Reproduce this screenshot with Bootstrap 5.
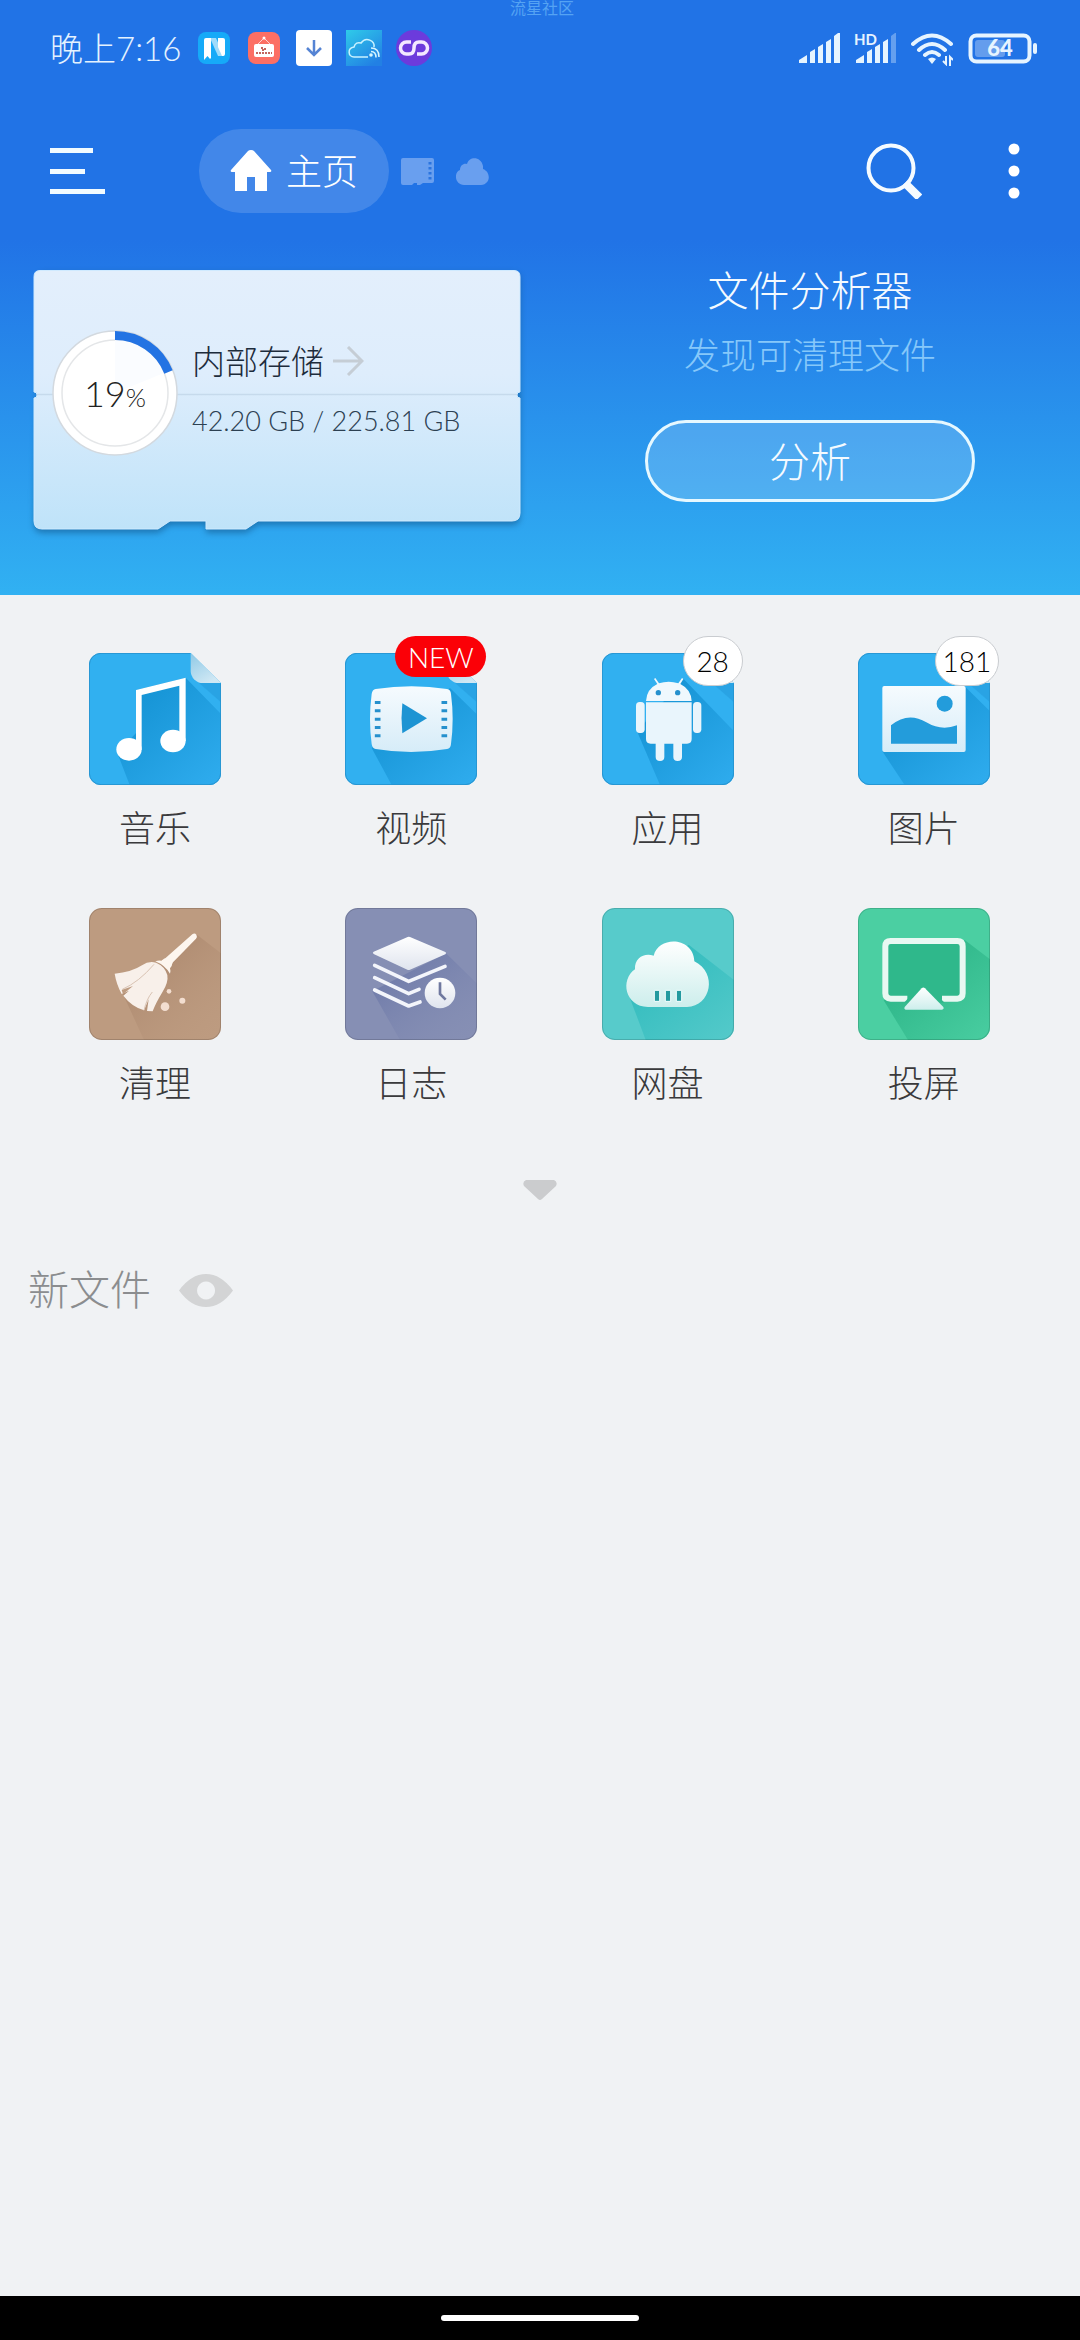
<!DOCTYPE html>
<html lang="zh-CN">
<head>
<meta charset="utf-8">
<meta name="viewport" content="width=device-width, initial-scale=1">
<title>主页</title>
<link href="https://cdn.jsdelivr.net/npm/bootstrap@5.3.0/dist/css/bootstrap.min.css" rel="stylesheet">
<style>
body{background:#f0f2f4;color:#222;font-family:Lato,"Noto Sans CJK SC",sans-serif;font-weight:300;font-size:36px;line-height:1}
a{color:inherit;text-decoration:none}
svg{display:block;flex:none}
.btn{--bs-btn-font-weight:300;--bs-btn-line-height:1;--bs-btn-padding-x:0;--bs-btn-padding-y:0;--bs-btn-font-size:36px}
.top-area{background:linear-gradient(#2173e6 0,#2173e6 240px,#31b1f2 100%);color:#f4faff;padding-bottom:65px}
.stamp{top:0;left:4px;right:0;font-size:16px;color:#55a3f3;font-weight:400;line-height:16px}
.status{height:96px;padding-left:50px;padding-right:43px}
.clock{font-size:33px;line-height:48px;width:146px;color:#e4f2ff;white-space:nowrap}
.apps{gap:14px}
.signals{gap:14px}
.toolbar{height:150px;padding-left:50px;padding-right:60px}
.home-tab{height:84px;padding:0 31px;background:rgba(255,255,255,.15);gap:14px;margin-left:94px;margin-right:12px;color:#fff}
.tabs-more{gap:22px}
.actions{gap:86px}
.dash{padding-top:24px}
.storage{margin:0 19px 0 33px;height:260px;color:#16304a}
.storage-bg{inset:0;width:100%;height:270px;overflow:visible}
.storage-row{padding-left:19px;gap:14px;height:246px}
.ring{width:126px;height:126px}
.pct{inset:0;color:#222;font-size:36px}
.pct span{font-size:26px;padding-top:8px}
.s-name{font-size:33px;gap:8px;color:#1d2c3c;line-height:60px}
.s-size{font-size:27px;color:#2c4052;line-height:60px;margin-bottom:4px}
.a-title{font-size:41px;line-height:41px}
.a-sub{font-size:36px;line-height:36px;color:#86c8fa;margin-top:26px}
.a-btn{width:330px;height:82px;margin-top:47px;border:3px solid #e6f8ff;background:rgba(255,255,255,.17);color:#f4faff;--bs-btn-font-size:41px}
.tiles{padding:58px 28px 0 27px}
.tile{height:255px;gap:24px}
.tile-label{line-height:38px;color:#3a3a3c}
.pill{top:-17px;font-size:28px;line-height:1}
.pill-new{right:-9px;width:91px;height:41px;background:#fb0007;color:#fff}
.pill-num{width:60px;height:50px;background:#fff;border:1px solid #c9ccd0;color:#000;right:-9px}
.pill-wide{width:64px}
.more{margin-top:17px;margin-left:-1px}
.recent{padding:66px 28px 0;gap:28px;font-size:41px;line-height:48px;color:#8b8d8f}
.sysnav{height:44px}
.sysnav span{width:198px;height:6px;background:#fff;border-radius:3px}
</style>
<script src="https://cdn.jsdelivr.net/npm/bootstrap@5.3.0/dist/js/bootstrap.bundle.min.js"></script>
</head>
<body class="d-flex flex-column min-vh-100">

<svg width="0" height="0" class="position-absolute" aria-hidden="true">
  <defs>
    <linearGradient id="shade" x1="0" y1="0" x2="1" y2="1"><stop offset=".2" stop-color="#1795d6"/><stop offset="1" stop-color="#31aef0"/></linearGradient>
    <linearGradient id="shadeBrown" x1="0" y1="0" x2="1" y2="1"><stop offset=".2" stop-color="#a9856b" stop-opacity=".8"/><stop offset=".9" stop-color="#bd9b80" stop-opacity=".2"/></linearGradient>
    <linearGradient id="shadeIndigo" x1="0" y1="0" x2="1" y2="1"><stop offset=".2" stop-color="#6c78a8" stop-opacity=".8"/><stop offset=".9" stop-color="#868fb4" stop-opacity=".2"/></linearGradient>
    <linearGradient id="shadeTeal" x1="0" y1="0" x2="1" y2="1"><stop offset=".2" stop-color="#33bcbe"/><stop offset="1" stop-color="#57cbcb"/></linearGradient>
    <linearGradient id="shadeGreen" x1="0" y1="0" x2="1" y2="1"><stop offset=".2" stop-color="#2db588"/><stop offset="1" stop-color="#4bcfa2"/></linearGradient>
    <linearGradient id="pale" x1="0" y1="0" x2="0" y2="1"><stop offset="0" stop-color="#f6fbfe"/><stop offset="1" stop-color="#d6ecf8"/></linearGradient>
    <linearGradient id="foldg" x1="0" y1="0" x2=".6" y2="1"><stop offset="0" stop-color="#8fc9e6"/><stop offset="1" stop-color="#d0e8f4"/></linearGradient>
    <linearGradient id="snow" x1="0" y1="0" x2="0" y2="1"><stop offset="0" stop-color="#fff"/><stop offset="1" stop-color="#dfe4ee"/></linearGradient>
    <linearGradient id="mint" x1="0" y1="0" x2="0" y2="1"><stop offset="0" stop-color="#fff"/><stop offset="1" stop-color="#cdeeec"/></linearGradient>
    <linearGradient id="cardg" x1="0" y1="0" x2="0" y2="1"><stop offset="0" stop-color="#e3effc"/><stop offset=".4" stop-color="#deedfc"/><stop offset="1" stop-color="#bfe3f9"/></linearGradient>
    <clipPath id="sheet"><path d="M36 0H305L396 90V360a36 36 0 0 1-36 36H36a36 36 0 0 1-36-36V36A36 36 0 0 1 36 0z"/></clipPath>
    <clipPath id="tilec"><rect width="396" height="396" rx="38"/></clipPath>
    <g id="paper"><path d="M36 0H305L396 90V360a36 36 0 0 1-36 36H36a36 36 0 0 1-36-36V36A36 36 0 0 1 36 0z" fill="#31b0f0"/><path d="M330 90H396V148z" fill="#2399da" opacity=".55"/></g>
    <g id="edge"><path d="M305 0L396 90H342a37 37 0 0 1-37-37z" fill="url(#foldg)"/><path d="M395 92V360a35 35 0 0 1-35 35H36a35 35 0 0 1-35-35V36A35 35 0 0 1 36 1H304" fill="none" stroke="#2793cf" stroke-width="3"/></g>
    <g id="frame"><rect x="1.500" y="1.500" width="393" height="393" rx="37" fill="none" stroke="#000" stroke-opacity=".15" stroke-width="3"/></g>
  </defs>
</svg>

<header class="top-area position-relative">
  <div class="stamp position-absolute text-center">流星社区</div>

  <div class="status d-flex align-items-center justify-content-between">
    <div class="d-flex align-items-center">
      <div class="clock">晚上7:16</div>
      <div class="apps d-flex align-items-center">
        <svg width="36" height="32" viewBox="-2 0 36 32"><rect width="32" height="32" rx="8" fill="#16aaf8"/><path d="M12 6h6l8 18h-6z" fill="#9fdbfb"/><path d="M6 8q0-2 2-2h5v20l-1 1-2.500-3L6 28z" fill="#fff"/><path d="M20 6h5q2 0 2 2v14q0 2-2 2h-1l-4-9z" fill="#fff"/></svg>
        <svg width="36" height="32" viewBox="-2 0 36 32"><rect width="32" height="32" rx="8" fill="#fc6f64"/><path d="M10 12l6-6 6 6" fill="none" stroke="#fff" stroke-opacity=".7"/><circle cx="16" cy="6" r="1.500" fill="#fff"/><rect x="6" y="12" width="20" height="13" rx="2" fill="#fff"/><path d="M14 15v3h3v-3M8 21h16" fill="none" stroke="#c4655e" stroke-width="2" stroke-dasharray="2 1"/></svg>
        <svg width="36" height="36" viewBox="0 0 36 36"><rect width="36" height="36" rx="4" fill="#fff"/><path d="M18 10v15M11 18l7 7 7-7" fill="none" stroke="#5584d4" stroke-width="2.500"/></svg>
        <svg width="36" height="36" viewBox="0 0 36 36"><defs><linearGradient id="cg" x1="0" y1="0" x2=".7" y2="1"><stop offset="0" stop-color="#2fcbe9"/><stop offset="1" stop-color="#2280e4"/></linearGradient></defs><rect width="36" height="36" fill="url(#cg)"/><path d="M22 27H8c-6 0-7-9 0-10 1-4 4-5 7-4 5-7 14-2 13 4" fill="none" stroke="#c9f2ff" stroke-width="1.500"/><circle cx="25" cy="25" r="1.800" fill="#d7f5ff"/><path d="M25 21.500q5 0 5 6M25 18q8 0 8 9" fill="none" stroke="#d7f5ff" stroke-width="1.500"/></svg>
        <svg width="36" height="36" viewBox="0 0 36 36"><circle cx="18" cy="18" r="18" fill="#6c3bdc"/><path d="M15 12h-4.500a6 6 0 0 0 0 12H13q5 0 5-6t5-6h2.500a6 6 0 0 1 0 12H21" fill="none" stroke="#f3e9ff" stroke-width="3.500"/></svg>
      </div>
    </div>
    <div class="signals d-flex align-items-center">
      <svg width="41" height="30" viewBox="0 0 41 30" fill="#e6f4ff"><path d="M0 30v-3l8-5v8zM11 30V19l5-3v14zM19 30V14l5-3v19zM27 30V9l5-3v24zM35 30V3l4-3h2v30z"/></svg>
      <svg width="43" height="36" viewBox="0 -3 43 36" fill="#e6f4ff"><text x="0" y="12" font-family="Lato" font-size="15" font-weight="700">HD</text><path d="M2 30v-3l8-5v8zM13 30V19l5-3v14zM21 30V14l5-3v19zM29 30V9l5-3v24z"/><path d="M37 30V3l4-3h1v30z" opacity=".35"/></svg>
      <svg width="42" height="36" viewBox="0 0 42 36" fill="none" stroke="#e6f4ff" stroke-width="4"><path d="M2 14Q21-3 40 14M8 20Q21 8 34 20M14 25Q21 19 28 25" stroke-linecap="round"/><path d="M17 29q4-3 8 0l-4 5z" fill="#e6f4ff" stroke="none"/><path d="M35 26v8l-3-3M39 36v-9l3 3" stroke-width="2"/></svg>
      <svg width="70" height="31" viewBox="0 0 70 31"><rect x="3.500" y="2.500" width="59" height="26" rx="6" fill="none" stroke="#e6f4ff" stroke-width="4"/><rect x="8" y="7" width="30" height="17" rx="3" fill="#fff" opacity=".3"/><rect x="66" y="10" width="4" height="11" rx="2" fill="#e6f4ff"/><text x="33" y="23" text-anchor="middle" font-family="Lato" font-size="22" font-weight="900" fill="#e6f4ff">64</text></svg>
    </div>
  </div>

  <nav class="toolbar d-flex align-items-center" aria-label="主导航">
    <button type="button" class="btn border-0" aria-label="菜单"><svg width="55" height="46" viewBox="0 0 55 46" fill="#f2fbff"><path d="M0 0h43v5H0zM0 21h35v5H0zM0 41h55v5H0z"/></svg></button>
    <button type="button" class="btn home-tab rounded-pill border-0 d-flex align-items-center">
      <svg width="42" height="42" viewBox="0 0 42 42"><path d="M21 0q2 0 3 1l17 19q1 2-1 2h-3v19H25V27h-8v14H5V22H2q-2 0-1-2L18 1q1-1 3-1z" fill="#fff"/></svg>
      <span>主页</span>
    </button>
    <div class="tabs-more d-flex align-items-center">
      <a href="#" aria-label="存储卡"><svg width="33" height="27" viewBox="0 0 33 27"><path d="M2 0h29q2 0 2 2v21q0 2-2 2H22l-3 2h-3v-2h-3l-2 2H2q-2 0-2-2V2q0-2 2-2z" fill="#699fef"/><path d="M29 4v18" stroke="#2b74df" stroke-width="3" stroke-dasharray="2.500 2.500"/></svg></a>
      <a href="#" aria-label="云"><svg width="33" height="27" viewBox="0 0 33 27"><path d="M8 27C-2 26-2 14 4 12 4 7 8 5 11 6c2-8 14-8 16 2v3c8 3 8 15-2 16z" fill="#699fef"/></svg></a>
    </div>
    <div class="actions ms-auto d-flex align-items-center">
      <button type="button" class="btn border-0" aria-label="搜索"><svg width="56" height="56" viewBox="0 0 56 56" fill="none" stroke="#f5fbff"><circle cx="25" cy="25" r="22.500" stroke-width="4"/><path d="M39 40l2 2" stroke-width="5"/><path d="M42 43l8.500 8.500" stroke-width="8" stroke-linecap="square"/></svg></button>
      <button type="button" class="btn border-0" aria-label="更多"><svg width="12" height="56" viewBox="0 0 12 56" fill="#fff"><circle cx="6" cy="6" r="5.500"/><circle cx="6" cy="28" r="5.500"/><circle cx="6" cy="50" r="5.500"/></svg></button>
    </div>
  </nav>

  <section class="dash row g-0">
    <div class="col-6">
      <a href="#" class="storage position-relative d-block">
        <svg class="storage-bg position-absolute" viewBox="0 0 488 270" preserveAspectRatio="none">
          <path d="M7 3H481q6 0 6 6V246q0 9-8 9H225l-12 8H173v-8H137l-12 8H10q-9 0-9-9z" fill="#12588d" opacity=".6" style="filter:blur(3px)"/>
          <path d="M7 .500H481q6 0 6 6V122a3 3 0 0 0 0 6V243q0 8-8 8H225l-12 8H173v-8H137l-12 8H9q-8 0-8-8V128a3 3 0 0 0 0-6V6.500q0-6 6-6z" fill="url(#cardg)" stroke="#cfeaff" stroke-width="1"/>
          <path d="M4 124.500H484" stroke="#c6daec" stroke-width="1.500"/>
        </svg>
        <div class="storage-row position-relative d-flex align-items-center">
          <div class="ring position-relative">
            <svg width="126" height="126" viewBox="0 0 126 126"><circle cx="63" cy="63" r="62" fill="#fff" stroke="#d3d9df" stroke-width="1.500"/><circle cx="63" cy="63" r="53" fill="#fff" stroke="#e4e6e8" stroke-width="1.500"/><path d="M63 63V10A53 53 0 0 1 112 43z" fill="#fafcff"/><path d="M63 5.500A57.500 57.500 0 0 1 116.500 42" fill="none" stroke="#2373e3" stroke-width="9"/></svg>
            <div class="pct position-absolute d-flex align-items-center justify-content-center">19<span>%</span></div>
          </div>
          <div>
            <div class="s-name d-flex align-items-center">内部存储
              <svg width="32" height="30" viewBox="0 0 32 30"><path d="M1 15h29M16 1l14 14-14 14" fill="none" stroke="#c5cdd5" stroke-width="3"/></svg></div>
            <div class="s-size text-nowrap">42.20 GB / 225.81 GB</div>
          </div>
        </div>
      </a>
    </div>
    <div class="col-6 d-flex flex-column align-items-center">
      <div class="a-title">文件分析器</div>
      <div class="a-sub">发现可清理文件</div>
      <button type="button" class="btn a-btn rounded-pill">分析</button>
    </div>
  </section>
</header>

<main class="flex-grow-1">
  <div class="tiles row row-cols-4 g-0">
    <div class="col"><a href="#" class="tile d-flex flex-column align-items-center">
      <svg width="132" height="132" viewBox="0 0 396 396"><use href="#paper"/><path d="M290 74L430 218V396H122L85 300 141 240V111z" fill="url(#shade)" clip-path="url(#sheet)"/><use href="#edge"/><path d="M141 111L290 74V264h-19V98L158 126V290h-17z" fill="#fff"/><ellipse cx="120" cy="289" rx="38" ry="34" fill="#fff"/><ellipse cx="252" cy="264" rx="38" ry="34" fill="#fff"/></svg>
      <span class="tile-label">音乐</span></a></div>
    <div class="col"><a href="#" class="tile d-flex flex-column align-items-center">
      <span class="position-relative"><svg width="132" height="132" viewBox="0 0 396 396"><use href="#paper"/><path d="M315 105L430 218V396H140L80 285z" fill="url(#shade)" clip-path="url(#sheet)"/><use href="#edge"/><path d="M92 108Q200 91 306 108q11 2 12 15 10 75 0 150-1 13-12 15-108 18-214 0-10-2-12-15-10-75 0-150 2-13 12-15z" fill="url(#pale)"/><path d="M98 144V256M298 144V256" stroke="#2590cd" stroke-width="17" stroke-dasharray="9 16"/><path d="M172 151L246 196 172 241q-5-45 0-90z" fill="#1d94d3"/></svg>
      <span class="pill pill-new rounded-pill position-absolute d-flex align-items-center justify-content-center">NEW</span></span>
      <span class="tile-label">视频</span></a></div>
    <div class="col"><a href="#" class="tile d-flex flex-column align-items-center">
      <span class="position-relative"><svg width="132" height="132" viewBox="0 0 396 396"><use href="#paper"/><path d="M245 78L440 280V396H174L105 235z" fill="url(#shade)" clip-path="url(#sheet)"/><use href="#edge"/><path d="M132 144q2-36 34-51l-10-15 4-3 11 16q29-9 58 0l11-16 4 3-9 15q32 16 34 51z" fill="#eff8fd"/><g fill="#e9f5fc"><path d="M132 148H269V258q0 14-14 14H240v40q0 12-13 12t-13-12V272H187v40q0 12-13 12t-13-12V272H146q-14 0-14-14z"/><rect x="102" y="147" width="26" height="93" rx="11"/><rect x="273" y="147" width="25" height="93" rx="11"/></g><circle cx="169" cy="119" r="8" fill="#2590cd"/><circle cx="227" cy="119" r="8" fill="#2590cd"/></svg>
      <span class="pill pill-num rounded-pill position-absolute d-flex align-items-center justify-content-center">28</span></span>
      <span class="tile-label">应用</span></a></div>
    <div class="col"><a href="#" class="tile d-flex flex-column align-items-center">
      <span class="position-relative"><svg width="132" height="132" viewBox="0 0 396 396"><use href="#paper"/><path d="M320 100L430 208V396H140L73 295z" fill="url(#shade)" clip-path="url(#sheet)"/><use href="#edge"/><rect x="73" y="99" width="250" height="198" rx="6" fill="url(#pale)"/><circle cx="260" cy="152" r="24" fill="#239cdb"/><path d="M99 217Q150 175 205 208 250 235 297 217V272H99z" fill="#239cdb"/></svg>
      <span class="pill pill-num pill-wide rounded-pill position-absolute d-flex align-items-center justify-content-center">181</span></span>
      <span class="tile-label">图片</span></a></div>
    <div class="col"><a href="#" class="tile d-flex flex-column align-items-center">
      <svg width="132" height="132" viewBox="0 0 396 396"><rect width="396" height="396" rx="38" fill="#bd9b80"/><path d="M324 80L440 170V396H165L98 250z" fill="url(#shadeBrown)" clip-path="url(#tilec)"/><use href="#frame"/><path d="M310 79q7-5 12 1 4 7-1 12L252 163q-3 5-4 11l-5 7q3 10 0 16-15-25-44-37 10-4 18-2l8-6q5-1 9-6z" fill="#fdf6ef"/><path d="M77 197q50-4 82-25 20-14 42-8 26 10 34 37 4 22-15 52-20 33-29 57l-17-1 5-35-14 33q-38-12-62-44l17-15-22 10q-16-30-21-61z" fill="#f8f0ea"/><path d="M100 244q50-22 95-75M165 307q8-35 25-55" fill="none" stroke="#d9c3b3" stroke-width="3"/><path d="M102 259l30-25-34 12z" fill="#bd9b80"/><g fill="#f3ded0"><circle cx="228" cy="296" r="13"/><circle cx="280" cy="278" r="9"/><circle cx="240" cy="250" r="7"/></g></svg>
      <span class="tile-label">清理</span></a></div>
    <div class="col"><a href="#" class="tile d-flex flex-column align-items-center">
      <svg width="132" height="132" viewBox="0 0 396 396"><rect width="396" height="396" rx="38" fill="#868fb4"/><path d="M303 136L430 260V396H165L82 250z" fill="url(#shadeIndigo)" clip-path="url(#tilec)"/><use href="#frame"/><path d="M188 87q3-2 7 0l106 45q5 3 0 7l-106 46q-4 2-8 0L86 138q-5-4 0-7z" fill="url(#snow)"/><path d="M89 172L191 220 300 175M89 209L191 257 222 244M89 246L191 294 225 282" fill="none" stroke="#f3f5fb" stroke-width="11" stroke-linecap="round" stroke-linejoin="round"/><circle cx="285" cy="255" r="46" fill="url(#snow)"/><path d="M285 223v35l17 17" fill="none" stroke="#6f789f" stroke-width="8"/></svg>
      <span class="tile-label">日志</span></a></div>
    <div class="col"><a href="#" class="tile d-flex flex-column align-items-center">
      <svg width="132" height="132" viewBox="0 0 396 396"><rect width="396" height="396" rx="38" fill="#57cbcb"/><path d="M260 110L440 250V396H131L80 260z" fill="url(#shadeTeal)" clip-path="url(#tilec)"/><use href="#frame"/><path d="M138 297C68 296 54 215 99 184c-2-36 30-51 56-41 15-60 119-58 122 17 71 35 50 135-22 137z" fill="url(#mint)"/><path d="M157 247h16v33h-16zM190 247h16v33h-16zM223 247h16v33h-16z" fill="#249a9f" stroke="#f4ffff" stroke-width="3"/></svg>
      <span class="tile-label">网盘</span></a></div>
    <div class="col"><a href="#" class="tile d-flex flex-column align-items-center">
      <svg width="132" height="132" viewBox="0 0 396 396"><rect width="396" height="396" rx="38" fill="#4bcfa2"/><path d="M320 96L430 180V396H150L77 277z" fill="url(#shadeGreen)" clip-path="url(#tilec)"/><rect x="82" y="99" width="232" height="174" rx="14" fill="#2fb88b"/><use href="#frame"/><path d="M148 272H98q-16 0-16-16V115q0-16 16-16H298q16 0 16 16V256q0 16-16 16H252" fill="none" stroke="#e8f8f2" stroke-width="18"/><path d="M138 284L196 222 260 284z" fill="#2fb88b"/><path d="M191 241q5-5 10 0l55 56q3 7-4 8H143q-6-1-3-8z" fill="url(#mint)"/></svg>
      <span class="tile-label">投屏</span></a></div>
  </div>
  <div class="more d-flex justify-content-center"><button type="button" class="btn border-0" aria-label="展开"><svg width="34" height="20" viewBox="0 0 34 20"><path d="M3 0H31q4 2 2 6L19 19q-2 2-4 0L1 6Q-1 2 3 0z" fill="#cbccce"/></svg></button></div>
  <div class="recent d-flex align-items-center">
    <span>新文件</span>
    <button type="button" class="btn border-0" aria-label="显示"><svg width="54" height="33" viewBox="0 0 54 33"><path fill-rule="evenodd" d="M0 16.500Q12 0 27 0T54 16.500Q42 33 27 33T0 16.500zM27 7.500a9 9 0 1 0 .1 0z" fill="#d3d4d5"/></svg></button>
  </div>
</main>

<footer class="sysnav bg-black d-flex align-items-center justify-content-center"><span></span></footer>
</body>
</html>
